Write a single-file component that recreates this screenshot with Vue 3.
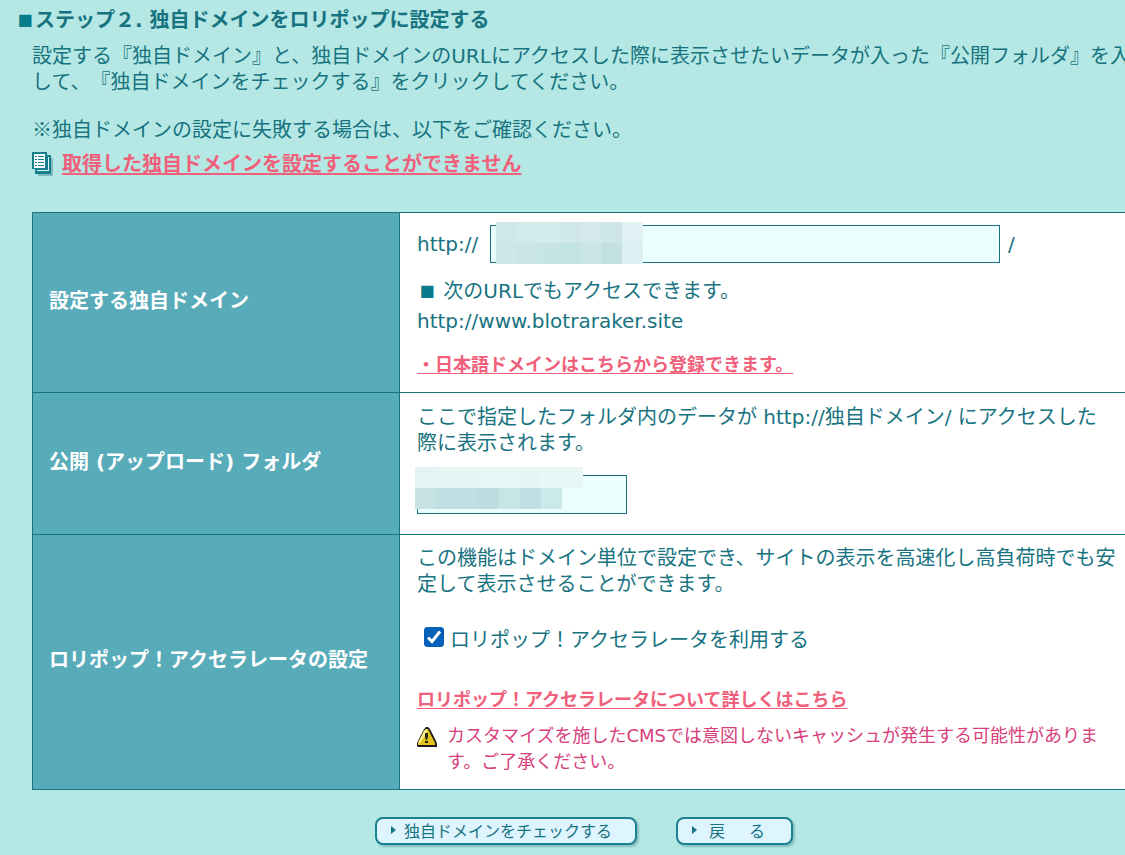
<script setup>
import { ref } from 'vue'

const domain = ref('')
const folder = ref('')
const accelerator = ref(true)

const cell = 21
const domainMask = [
  ['#cfe7e9', '#d3eaeb', '#d4ebec', '#cfe7e9', '#d3e9eb', '#cfe6e8', '#dff1f3'],
  ['#cde6e8', '#cae5e7', '#c6e3e5', '#c3e2e4', '#cbe5e7', '#c3e1e3', '#dceff1'],
]
const folderMask = [
  ['#e4f3f3', '#e7f4f4', '#e6f4f4', '#e7f5f5', '#e7f5f5', '#e6f4f4', '#e8f6f5', '#e9f6f6'],
  ['#c6e0e4', '#bfdfe2', '#bfdfe2', '#bbdde0', '#c8e5e6', '#c0dde1', '#cbe9ea'],
]
</script>

<template>
  <main class="page">
    <h1 class="title"><span class="square">■</span>ステップ２. 独自ドメインをロリポップに設定する</h1>

    <section class="intro">
      <p>設定する『独自ドメイン』と、独自ドメインのURLにアクセスした際に表示させたいデータが入った『公開フォルダ』を入<br>して、『独自ドメインをチェックする』をクリックしてください。</p>
      <p class="hint"><span class="mark">※</span>独自ドメインの設定に失敗する場合は、以下をご確認ください。</p>
      <p class="help">
        <svg class="doc" viewBox="0 0 21 24" width="21" height="24" aria-hidden="true">
          <rect x="6" y="6" width="15" height="18" rx="1" fill="#7fb9bc" />
          <rect x="3" y="3" width="16" height="19" fill="#15808c" />
          <rect x="5" y="18" width="12" height="1" fill="#d9f3f3" />
          <rect x="16" y="5" width="1" height="14" fill="#d9f3f3" />
          <rect x="0" y="0" width="15" height="17" fill="#15808c" />
          <rect x="2" y="2" width="11" height="14" fill="#fff" />
          <path d="M3 4.5h2M3 7.5h2M3 10.5h2M3 13.5h2M6 4.5h6M6 7.5h6M6 10.5h6M6 13.5h6" stroke="#15808c" stroke-width="1" fill="none" />
        </svg>
        <a href="#help">取得した独自ドメインを設定することができません</a>
      </p>
    </section>

    <form @submit.prevent>
      <table class="settings">
        <tbody>
          <tr>
            <th scope="row"><label for="domain">設定する独自ドメイン</label></th>
            <td class="domain">
              <div class="url">
                <span class="scheme">http://</span>
                <span class="field">
                  <input id="domain" v-model="domain" type="text">
                  <svg class="mask" width="147" height="42" shape-rendering="crispEdges" aria-hidden="true">
                    <template v-for="(row, y) in domainMask" :key="y">
                      <rect v-for="(c, x) in row" :key="x" :x="x * cell" :y="y * cell" :width="cell" :height="cell" :fill="c" />
                    </template>
                  </svg>
                </span>
                <span>/</span>
              </div>
              <p class="also"><span class="square">■</span> 次のURLでもアクセスできます。<br>http://www.blotraraker.site</p>
              <p class="more"><a href="#japanese">・日本語ドメインはこちらから登録できます。</a></p>
            </td>
          </tr>
          <tr>
            <th scope="row"><label for="folder">公開 (アップロード) フォルダ</label></th>
            <td class="folder">
              <p>ここで指定したフォルダ内のデータが http://独自ドメイン/ にアクセスした<br>際に表示されます。</p>
              <span class="field">
                <input id="folder" v-model="folder" type="text">
                <svg class="mask" width="168" height="42" shape-rendering="crispEdges" aria-hidden="true">
                  <template v-for="(row, y) in folderMask" :key="y">
                    <rect v-for="(c, x) in row" :key="x" :x="x * cell" :y="y * cell" :width="cell" :height="cell" :fill="c" />
                  </template>
                </svg>
              </span>
            </td>
          </tr>
          <tr>
            <th scope="row">ロリポップ！アクセラレータの設定</th>
            <td class="accel">
              <p>この機能はドメイン単位で設定でき、サイトの表示を高速化し高負荷時でも安<br>定して表示させることができます。</p>
              <label class="check">
                <input v-model="accelerator" type="checkbox">
                <svg class="tick" viewBox="0 0 20 20" width="20" height="20" aria-hidden="true">
                  <path d="M4 10.5 8 14.5 16 4.5" fill="none" stroke="#fff" stroke-width="3" />
                </svg>
                <span>ロリポップ！アクセラレータを利用する</span>
              </label>
              <p class="more"><a href="#accelerator">ロリポップ！アクセラレータについて詳しくはこちら</a></p>
              <div class="note">
                <svg viewBox="0 0 20 20" width="20" height="20" aria-hidden="true">
                  <path d="M9 0h2l2 2 2 4 2 4 2 4 1 3v3H1l-1-1v-3l2-4 2-4 2-4 2-3Z" fill="#1c1a18" />
                  <path d="M9 2h2l1 2 2 4 2 4 2 4v2H1v-2l2-4 2-4 2-4Z" fill="#e3c21a" />
                  <path d="M9 2h1v3L7 10l-4 6H1l2-4 2-4 2-4Z" fill="#fbf08a" />
                  <path d="M8 6h3v4l-1 3H9l-1-3ZM8 14h3v2H8Z" fill="#2a2418" />
                </svg>
                <p>カスタマイズを施したCMSでは意図しないキャッシュが発生する可能性がありま<br>す。ご了承ください。</p>
              </div>
            </td>
          </tr>
        </tbody>
      </table>

      <div class="actions">
        <button type="submit" class="submit"><i class="arrow"></i><span>独自ドメインをチェックする</span></button>
        <button type="button" class="back"><i class="arrow"></i><span class="spaced"><span>戻</span><span>る</span></span></button>
      </div>
    </form>
  </main>
</template>

<style>
body {
  margin: 0;
  background: #b5e8e4;
}
</style>

<style scoped>
.page {
  overflow: hidden;
  padding: 7px 0 9px;
  color: #17737f;
  font: 20px/26px "DejaVu Sans", "Noto Sans CJK JP", sans-serif;
  text-spacing-trim: space-all;
}
p,
h1 {
  margin: 0;
  font-size: inherit;
  white-space: nowrap;
}
a {
  color: #f0607a;
  font-weight: bold;
  text-decoration: underline;
  text-underline-offset: 2px;
  text-decoration-thickness: 2px;
  text-decoration-skip-ink: none;
}
.title {
  padding-left: 15px;
}
.square {
  display: inline-block;
  width: 20px;
  color: #087c8c;
  font: 16px/20px "DejaVu Sans", sans-serif;
  text-align: center;
  vertical-align: 2px;
}
.mark {
  font-family: "Noto Sans CJK JP", sans-serif;
}
.intro {
  margin: 10px 0 35px 32px;
}
.hint {
  margin-top: 21px;
}
.help {
  display: flex;
  align-items: center;
  gap: 9px;
  margin-top: 8px;
}
.settings {
  width: calc(100% - 16px);
  margin-left: 32px;
  border-collapse: collapse;
}
th,
td {
  border: 1px solid #17737f;
  text-align: left;
}
th {
  width: 333px;
  padding: 0 17px 4px 16px;
  background: #58abb9;
  color: #fff;
  white-space: nowrap;
}
td {
  padding: 0 6px 0 17px;
  background: #fff;
  vertical-align: top;
}
.domain {
  padding-top: 12px;
  padding-bottom: 14px;
}
.folder {
  padding-top: 11px;
  padding-bottom: 20px;
}
.accel {
  padding-top: 10px;
  padding-bottom: 14px;
}
.url {
  display: flex;
  align-items: center;
  gap: 8px;
}
.scheme {
  min-width: 65px;
}
.field {
  position: relative;
  display: flex;
}
.field input {
  box-sizing: border-box;
  width: 510px;
  height: 38px;
  padding: 0 6px;
  border: 1px solid #17737f;
  border-radius: 0;
  background: #ebffff;
  color: inherit;
  font: inherit;
}
.folder .field {
  margin-top: 19px;
}
.folder .field input {
  width: 210px;
  height: 39px;
}
.mask {
  position: absolute;
  top: -3px;
  left: 6px;
}
.folder .mask {
  top: -8px;
  left: -2px;
}
.also {
  margin-top: 13px;
  line-height: 30px;
}
.more {
  font-size: 18px;
}
.more a {
  text-decoration-thickness: 1px;
}
.domain .more {
  margin-top: 16px;
}
.check {
  position: relative;
  display: flex;
  align-items: flex-start;
  gap: 6px;
  margin: 30px 0 34px 7px;
}
.check input {
  appearance: none;
  width: 20px;
  height: 20px;
  margin: 0;
  border: 1px solid #767676;
  border-radius: 3px;
}
.check input:checked {
  border-color: #0560b8;
  background: #0560b8;
}
.tick {
  position: absolute;
  left: 0;
  pointer-events: none;
}
.note {
  display: flex;
  align-items: flex-start;
  gap: 10px;
  margin-top: 10px;
  color: #d8407c;
  font-size: 18px;
}
.note svg {
  flex: none;
  margin-top: 4px;
}
.actions {
  display: flex;
  gap: 39px;
  margin: 27px 0 0 375px;
}
button {
  display: flex;
  align-items: center;
  gap: 8px;
  box-sizing: border-box;
  height: 28px;
  padding: 0 14px 2px;
  border: 2px solid #1b8090;
  border-radius: 8px;
  background: #def5ff;
  box-shadow: 2px 2px 2px #86bfc2;
  color: #17737f;
  font: 16px/22px "Noto Sans CJK JP", sans-serif;
}
.submit {
  width: 262px;
}
.back {
  gap: 12px;
  width: 117px;
}
.spaced {
  display: flex;
  gap: 24px;
}
.arrow {
  border: solid transparent;
  border-width: 4px 0 4px 5px;
  border-left-color: #17737f;
}
</style>
